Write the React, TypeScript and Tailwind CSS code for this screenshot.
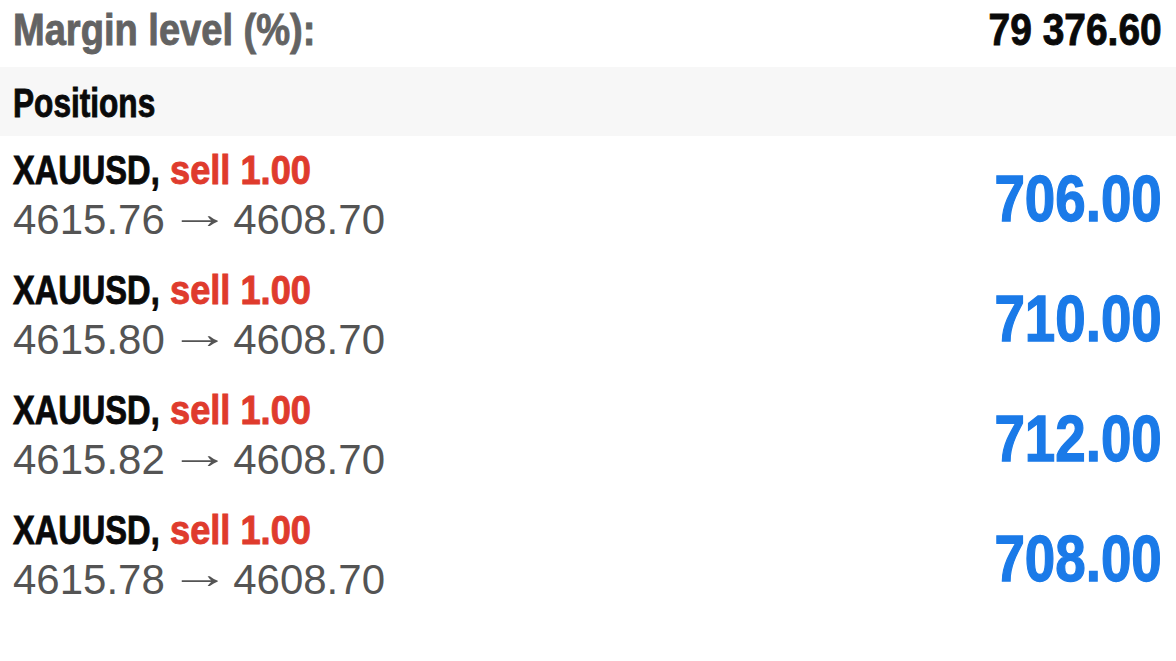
import React from 'react';

const positions = [
  { symbol: 'XAUUSD', side: 'sell 1.00', open: '4615.76', current: '4608.70', profit: '706.00' },
  { symbol: 'XAUUSD', side: 'sell 1.00', open: '4615.80', current: '4608.70', profit: '710.00' },
  { symbol: 'XAUUSD', side: 'sell 1.00', open: '4615.82', current: '4608.70', profit: '712.00' },
  { symbol: 'XAUUSD', side: 'sell 1.00', open: '4615.78', current: '4608.70', profit: '708.00' },
];

// no condensed face installed, so bold Arial-metric text is squeezed horizontally and thickened a bit
const bold = "font-['Liberation_Sans',Arial,sans-serif] font-bold whitespace-nowrap [-webkit-text-stroke:0.9px_currentColor]";

export default function App() {
  return (
    <div className="w-[1176px] h-[661px] bg-white overflow-hidden font-['Liberation_Sans',Arial,sans-serif]">
      <div className={`h-[67px] flex justify-between items-start pt-[4px] pl-[13px] pr-[14px] text-[44px] leading-[52px] ${bold}`}>
        <span className="inline-block origin-left scale-x-[0.865] text-[#636363]">Margin level (%):</span>
        <span className="inline-block origin-right scale-x-[0.885] text-[#0a0a0a]">79 376.60</span>
      </div>

      <div className="h-[69px] bg-[#f7f7f7] pt-[11px] pl-[13px]">
        <span className={`inline-block origin-left scale-x-[0.79] text-[40px] leading-[50px] text-[#0a0a0a] ${bold}`}>Positions</span>
      </div>

      {positions.map((p, i) => (
        <div key={i} className="h-[120px] flex items-center justify-between pl-[13px] pr-[14px]">
          <div className="pt-[9px] pb-[11px] self-start">
            <div className={`flex text-[40px] leading-[50px] ${bold}`}>
              <span className="w-[157px]">
                <span className="inline-block origin-left scale-x-[0.815] text-[#0a0a0a]">{p.symbol},</span>
              </span>
              <span className="inline-block origin-left scale-x-[0.905] text-[#df3b2d]">{p.side}</span>
            </div>
            <div className="text-[42px] leading-[50px] text-[#545454] whitespace-nowrap">
              {p.open}{' '}
              <span className="inline-block w-[45px] text-center scale-x-[1.45] -translate-y-[6px]">→</span>
              {' '}{p.current}
            </div>
          </div>
          <div className={`inline-block origin-right scale-x-[0.855] text-[64px] leading-[72px] text-[#1a7ae8] mt-[6px] ${bold} [-webkit-text-stroke:1.3px_currentColor]`}>
            {p.profit}
          </div>
        </div>
      ))}
    </div>
  );
}
